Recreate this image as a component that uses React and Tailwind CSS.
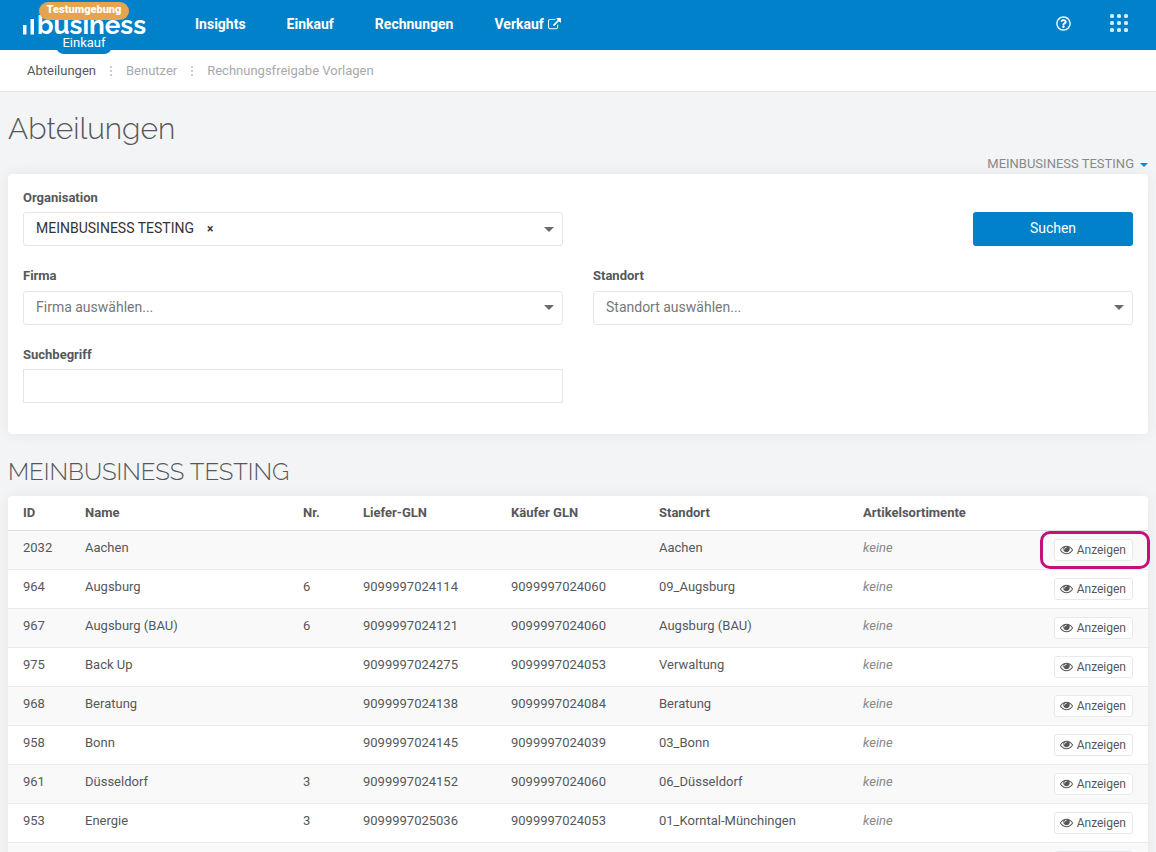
import React, { useState } from 'react';
import { FaRegQuestionCircle } from 'react-icons/fa';

const NAV = [
    { label: 'Insights' },
    { label: 'Einkauf' },
    { label: 'Rechnungen' },
    { label: 'Verkauf', external: true },
];

const SUBNAV = ['Abteilungen', 'Benutzer', 'Rechnungsfreigabe Vorlagen'];

const ROWS = [
    { id: '2032', name: 'Aachen', nr: '', liefer: '', kaeufer: '', standort: 'Aachen', marked: true },
    { id: '964', name: 'Augsburg', nr: '6', liefer: '9099997024114', kaeufer: '9099997024060', standort: '09_Augsburg' },
    { id: '967', name: 'Augsburg (BAU)', nr: '6', liefer: '9099997024121', kaeufer: '9099997024060', standort: 'Augsburg (BAU)' },
    { id: '975', name: 'Back Up', nr: '', liefer: '9099997024275', kaeufer: '9099997024053', standort: 'Verwaltung' },
    { id: '968', name: 'Beratung', nr: '', liefer: '9099997024138', kaeufer: '9099997024084', standort: 'Beratung' },
    { id: '958', name: 'Bonn', nr: '', liefer: '9099997024145', kaeufer: '9099997024039', standort: '03_Bonn' },
    { id: '961', name: 'Düsseldorf', nr: '3', liefer: '9099997024152', kaeufer: '9099997024060', standort: '06_Düsseldorf' },
    { id: '953', name: 'Energie', nr: '3', liefer: '9099997025036', kaeufer: '9099997024053', standort: '01_Korntal-Münchingen' },
    { id: '', name: '', nr: '', liefer: '', kaeufer: '', standort: '' },
];

const EyeIcon = () => (
    <svg viewBox="0 0 1792 1792" className="w-[13px] h-[13px] shrink-0" fill="currentColor" aria-hidden="true">
        <path d="M1664 960q-152-236-381-353 61 104 61 225 0 185-131.5 316.5t-316.5 131.5-316.5-131.5-131.5-316.5q0-121 61-225-229 117-381 353 133 205 333.5 326.5t434.5 121.5 434.5-121.5 333.5-326.5zm-720-384q0-20-14-34t-34-14q-125 0-214.5 89.5t-89.5 214.5q0 20 14 34t34 14 34-14 14-34q0-86 61-147t147-61q20 0 34-14t14-34zm848 384q0 34-20 69-140 230-376.5 368.5t-499.5 138.5-499.5-139-376.5-368q-20-35-20-69t20-69q140-229 376.5-368t499.5-139 499.5 139 376.5 368q20 35 20 69z" />
    </svg>
);

const ExternalIcon = () => (
    <svg viewBox="0 0 1792 1792" className="w-[13px] h-[13px] shrink-0" fill="currentColor" aria-hidden="true">
        <path d="M1408 928v320q0 119-84.5 203.5t-203.5 84.5h-832q-119 0-203.5-84.5t-84.5-203.5v-832q0-119 84.5-203.5t203.5-84.5h704q14 0 23 9t9 23v64q0 14-9 23t-23 9h-704q-66 0-113 47t-47 113v832q0 66 47 113t113 47h832q66 0 113-47t47-113v-320q0-14 9-23t23-9h64q14 0 23 9t9 23zm384-864v512q0 26-19 45t-45 19-45-19l-176-176-652 652q-10 10-23 10t-23-10l-114-114q-10-10-10-23t10-23l652-652-176-176q-19-19-19-45t19-45 45-19h512q26 0 45 19t19 45z" />
    </svg>
);

const GridIcon = () => (
    <svg viewBox="0 0 18 18" className="w-[18px] h-[18px]" fill="currentColor" aria-hidden="true">
        {[0, 7, 14].map(y => [0, 7, 14].map(x => <rect key={`${x}-${y}`} x={x} y={y} width="4" height="4" rx="1.5" />))}
    </svg>
);

const Caret = ({ className }) => (
    <svg viewBox="0 0 10 5" className={className} fill="currentColor" aria-hidden="true">
        <path d="M0 0h10L5 5z" />
    </svg>
);

function Logo() {
    return (
        <a href="#" className="relative flex h-[50px] w-[172px] shrink-0 pl-[23px] text-white">
            <svg viewBox="0 0 14 20" className="mt-[15px] h-5 w-[14px]" fill="currentColor" aria-hidden="true">
                <rect x="0" y="10" width="3.5" height="9.5" />
                <rect x="7.5" y="4" width="3.5" height="15.5" />
            </svg>
            <span className="mt-[5px] font-['Raleway','Lato',sans-serif] text-[26px] leading-10 font-bold">business</span>
            <span className="absolute top-9 left-14 flex h-[18px] w-14 items-center justify-center rounded-b-lg bg-[#0081c9] pb-1 text-[13px] leading-4">Einkauf</span>
            <span className="absolute top-[2px] left-[39px] h-[18px] w-[90px] rounded-full bg-[#e5a550] text-center text-[11px] leading-4 font-black">Testumgebung</span>
        </a>
    );
}

function SelectField({ id, label, placeholder }) {
    return (
        <div>
            <label htmlFor={id} className="block text-[13px] leading-[18px] font-bold">{label}</label>
            <div className="relative mt-[6px]">
                <select id={id} defaultValue="" className="block h-[34px] w-full appearance-none rounded-[3px] border border-[#e5e6e7] bg-white px-3 pb-[2px] text-sm text-[#777] outline-none">
                    <option value="">{placeholder}</option>
                </select>
                <Caret className="pointer-events-none absolute top-[14px] right-[9px] h-[5px] w-[10px] text-[#676a6c]" />
            </div>
        </div>
    );
}

export default function App() {
    const [term, setTerm] = useState('');

    return (
        <div className="h-screen overflow-hidden bg-[#f3f4f6] font-['Roboto',sans-serif] text-[13px] text-[#55585a]">
            <header className="flex h-[50px] bg-[#0081c9] text-white">
                <Logo />
                <nav className="flex items-center gap-[41px] pb-[2px] pl-[23px] text-sm font-bold">
                    {NAV.map(n => (
                        <a key={n.label} href="#" className="flex items-center gap-1">
                            {n.label}{n.external && <ExternalIcon />}
                        </a>
                    ))}
                </nav>
                <div className="ml-auto flex items-center gap-[39px] pr-7 pb-1">
                    <button type="button" aria-label="Hilfe"><FaRegQuestionCircle size={15} /></button>
                    <button type="button" aria-label="Anwendungen" className="text-[#d3edfb]"><GridIcon /></button>
                </div>
            </header>

            <nav className="flex h-[42px] items-center border-b border-[#e1e5e9] bg-white pl-[27px]">
                {SUBNAV.map((s, i) => (
                    <React.Fragment key={s}>
                        {i > 0 && (
                            <svg viewBox="0 0 2 10" className="mx-[14px] h-[10px] w-[2px]" fill="#cccccc" aria-hidden="true">
                                <path d="M0 0h2v2H0zM0 4h2v2H0zM0 8h2v2H0z" />
                            </svg>
                        )}
                        <a href="#" className={i === 0 ? 'text-[#55585a]' : 'text-[#a7a9ab]'}>{s}</a>
                    </React.Fragment>
                ))}
            </nav>

            <main className="px-2">
                <h1 className="pt-[19px] font-['Raleway','Lato',sans-serif] text-[30px] leading-9 font-light">Abteilungen</h1>
                <div className="mt-[7px] flex h-5 justify-end">
                    <button type="button" className="flex items-center gap-[6px] text-[#888]">
                        MEINBUSINESS TESTING <Caret className="mt-[2px] h-1 w-2 text-[#1c84c6]" />
                    </button>
                </div>

                <form onSubmit={e => e.preventDefault()} className="grid grid-cols-2 gap-x-[30px] gap-y-[21px] rounded bg-white px-[15px] pt-[15px] pb-[31px] shadow-[0_0_16px_rgba(0,0,0,0.06)]">
                    <div>
                        <label htmlFor="organisation" className="block text-[13px] leading-[18px] font-bold">Organisation</label>
                        <div className="mt-[5px] flex h-[34px] items-center rounded-[3px] border border-[#e5e6e7] pr-2 pl-3">
                            <select id="organisation" className="appearance-none bg-white pb-[2px] text-sm text-[#333] outline-none">
                                <option>MEINBUSINESS TESTING</option>
                            </select>
                            <button type="button" aria-label="Entfernen" className="ml-3 text-xs font-bold text-[#333]">×</button>
                            <Caret className="ml-auto h-[5px] w-[10px] text-[#676a6c]" />
                        </div>
                    </div>
                    <div className="flex items-end justify-end">
                        <button type="submit" className="h-[34px] w-40 rounded-[3px] bg-[#0081c9] pb-[2px] text-sm text-white">Suchen</button>
                    </div>
                    <SelectField id="firma" label="Firma" placeholder="Firma auswählen..." />
                    <SelectField id="standort" label="Standort" placeholder="Standort auswählen..." />
                    <div>
                        <label htmlFor="suchbegriff" className="block text-[13px] leading-[18px] font-bold">Suchbegriff</label>
                        <input id="suchbegriff" type="text" value={term} onChange={e => setTerm(e.target.value)} className="mt-[5px] block h-[34px] w-full border border-[#e5e6e7] px-3 text-sm outline-none" />
                    </div>
                </form>

                <h2 className="pt-[22px] pb-2 font-['Raleway','Lato',sans-serif] text-2xl font-light">MEINBUSINESS TESTING</h2>

                <div className="rounded bg-white shadow-[0_0_16px_rgba(0,0,0,0.06)]">
                    <table className="w-full table-fixed">
                        <thead>
                            <tr className="h-[34px] border-b border-[#dddddd] text-left">
                                <th className="w-[69px] pr-2 pl-[15px]">ID</th>
                                <th className="w-[218px] px-2">Name</th>
                                <th className="w-[60px] px-2">Nr.</th>
                                <th className="w-[148px] px-2">Liefer-GLN</th>
                                <th className="w-[148px] px-2">Käufer GLN</th>
                                <th className="w-[204px] px-2">Standort</th>
                                <th className="w-[148px] px-2">Artikelsortimente</th>
                                <th></th>
                            </tr>
                        </thead>
                        <tbody>
                            {ROWS.map((r, i) => (
                                <tr key={i} className="h-[39px] border-b border-[#e7eaec] align-top odd:bg-[#f9f9f9]">
                                    <td className="pt-2 pr-2 pl-[15px] leading-[18px]">{r.id}</td>
                                    <td className="px-2 pt-2 leading-[18px]">{r.name}</td>
                                    <td className="px-2 pt-2 leading-[18px]">{r.nr}</td>
                                    <td className="px-2 pt-2 leading-[18px]">{r.liefer}</td>
                                    <td className="px-2 pt-2 leading-[18px]">{r.kaeufer}</td>
                                    <td className="px-2 pt-2 leading-[18px]">{r.standort}</td>
                                    <td className="px-2 pt-2 leading-[18px] text-[#888] italic">{r.id && 'keine'}</td>
                                    <td className="pt-2 pr-[15px] pl-2">
                                        <div className="relative ml-auto w-fit">
                                            <button type="button" className="flex h-[22px] items-center gap-1 rounded-[3px] border border-[#e7eaec] bg-white pr-[6px] pl-[5px] text-xs">
                                                <EyeIcon /> Anzeigen
                                            </button>
                                            {r.marked && <span className="pointer-events-none absolute -top-2 -right-[17px] -bottom-2 -left-[14px] rounded-[10px] border-3 border-[#c4107f]"></span>}
                                        </div>
                                    </td>
                                </tr>
                            ))}
                        </tbody>
                    </table>
                </div>
            </main>
        </div>
    );
}
